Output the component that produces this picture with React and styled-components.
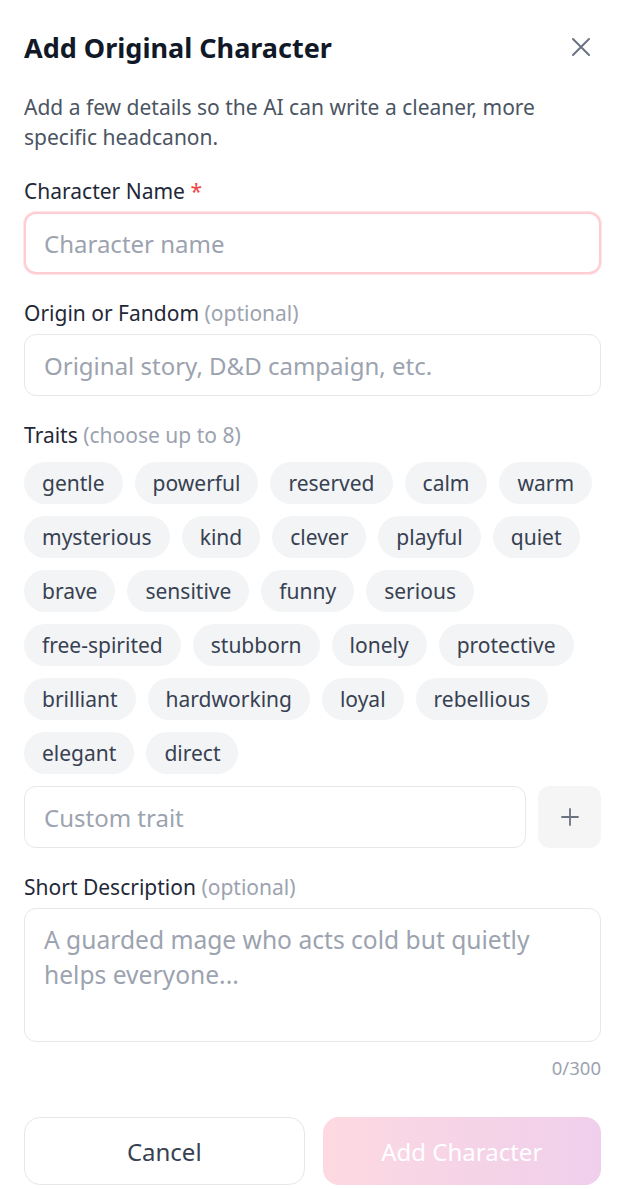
import React from 'react'
import styled, { createGlobalStyle } from 'styled-components'

const traits = [
    'gentle', 'powerful', 'reserved', 'calm', 'warm',
    'mysterious', 'kind', 'clever', 'playful', 'quiet',
    'brave', 'sensitive', 'funny', 'serious',
    'free-spirited', 'stubborn', 'lonely', 'protective',
    'brilliant', 'hardworking', 'loyal', 'rebellious',
    'elegant', 'direct'
]

const App = () => {
    return (
        <>
            <GlobalStyle />
            <Modal>
                <Header>
                    <Title>Add Original Character</Title>
                    <CloseButton aria-label='close'>
                        <svg width='20' height='20' viewBox='0 0 20 20' fill='none' stroke='currentColor' strokeWidth='2' strokeLinecap='round'>
                            <path d='M2 2L18 18M18 2L2 18' />
                        </svg>
                    </CloseButton>
                </Header>
                <Intro>Add a few details so the AI can write a cleaner, more specific headcanon.</Intro>

                <Field>
                    <Label>Character Name <Required>*</Required></Label>
                    <Input focused placeholder='Character name' />
                </Field>

                <Field>
                    <Label>Origin or Fandom <Hint>(optional)</Hint></Label>
                    <Input placeholder='Original story, D&D campaign, etc.' />
                </Field>

                <Field>
                    <Label spaced>Traits <Hint>(choose up to 8)</Hint></Label>
                    <Chips>
                        {traits.map(t => <Chip key={t}>{t}</Chip>)}
                    </Chips>
                    <CustomRow>
                        <Input placeholder='Custom trait' />
                        <AddButton aria-label='add trait'>
                            <svg width='20' height='20' viewBox='0 0 20 20' fill='none' stroke='currentColor' strokeWidth='1.8' strokeLinecap='round'>
                                <path d='M10 2V18M2 10H18' />
                            </svg>
                        </AddButton>
                    </CustomRow>
                </Field>

                <Field>
                    <Label>Short Description <Hint>(optional)</Hint></Label>
                    <TextArea placeholder='A guarded mage who acts cold but quietly helps everyone...' />
                    <Counter>0/300</Counter>
                </Field>

                <Actions>
                    <Button>Cancel</Button>
                    <Button primary disabled>Add Character</Button>
                </Actions>
            </Modal>
        </>
    )
}

export default App

const GlobalStyle = createGlobalStyle`
    * {
        box-sizing: border-box;
    }
    body {
        margin: 0;
        background: #ffffff;
        font-family: "Noto Sans", "Open Sans", sans-serif;
    }
`

const Modal = styled.div`
    width: 632px;
    padding: 24px 31px 4px 24px;
    display: flex;
    flex-direction: column;
`

const Header = styled.div`
    display: flex;
    align-items: center;
    justify-content: space-between;
    height: 46px;
`

const Title = styled.h2`
    margin: 0;
    font-size: 27px;
    font-weight: 700;
    color: #111827;
`

const CloseButton = styled.button`
    border: none;
    background: none;
    padding: 0;
    margin-right: 10px;
    color: #6b7280;
    display: flex;
`

const Intro = styled.p`
    margin: 22px 0 0;
    font-size: 21px;
    line-height: 30px;
    color: #4b5563;
`

const Field = styled.div`
    display: flex;
    flex-direction: column;
    margin-top: 25px;
`

const Label = styled.label`
    font-size: 21px;
    line-height: 28px;
    color: #1f2937;
    margin-bottom: ${p => (p.spaced ? '13px' : '7px')};
`

const Required = styled.span`
    color: #ef4444;
`

const Hint = styled.span`
    color: #9ca3af;
`

const Input = styled.input`
    width: 100%;
    height: 62px;
    padding: 0 ${p => (p.focused ? '18px' : '19px')};
    border-radius: 12px;
    border: ${p => (p.focused ? '2px solid #fecdd3' : '1px solid #e5e7eb')};
    box-shadow: ${p => (p.focused ? '0 0 0 1px #ffe4e8' : 'none')};
    font-family: inherit;
    font-size: 24px;
    color: #111827;
    background: #fff;
    outline: none;

    &::placeholder {
        color: #9ca3af;
    }
`

const Chips = styled.div`
    display: flex;
    flex-wrap: wrap;
    gap: 12px;
`

const Chip = styled.button`
    height: 42px;
    padding: 0 18px;
    border: none;
    border-radius: 21px;
    background: #f3f4f6;
    color: #374151;
    font-family: inherit;
    font-size: 21px;
`

const CustomRow = styled.div`
    display: flex;
    gap: 12px;
    margin-top: 12px;
`

const AddButton = styled.button`
    flex: 0 0 63px;
    height: 62px;
    border: none;
    border-radius: 12px;
    background: #f5f5f5;
    color: #6b7280;
    display: flex;
    align-items: center;
    justify-content: center;
`

const TextArea = styled.textarea`
    width: 100%;
    height: 134px;
    padding: 13px 19px;
    border: 1px solid #e5e7eb;
    border-radius: 12px;
    font-family: inherit;
    font-size: 24.6px;
    line-height: 35px;
    resize: none;
    outline: none;

    &::placeholder {
        color: #9ca3af;
    }
`

const Counter = styled.div`
    align-self: flex-end;
    margin-top: 14px;
    font-size: 18.5px;
    line-height: 24px;
    color: #9ca3af;
`

const Actions = styled.div`
    display: flex;
    gap: 18px;
    margin-top: 37px;
`

const Button = styled.button`
    flex: 1;
    height: 68px;
    border-radius: 16px;
    font-family: inherit;
    font-size: 24px;
    border: ${p => (p.primary ? 'none' : '1px solid #e5e7eb')};
    background: ${p => (p.primary ? 'linear-gradient(90deg, #fdd9e1, #efcfec)' : '#ffffff')};
    color: ${p => (p.primary ? '#ffffff' : '#374151')};
`
